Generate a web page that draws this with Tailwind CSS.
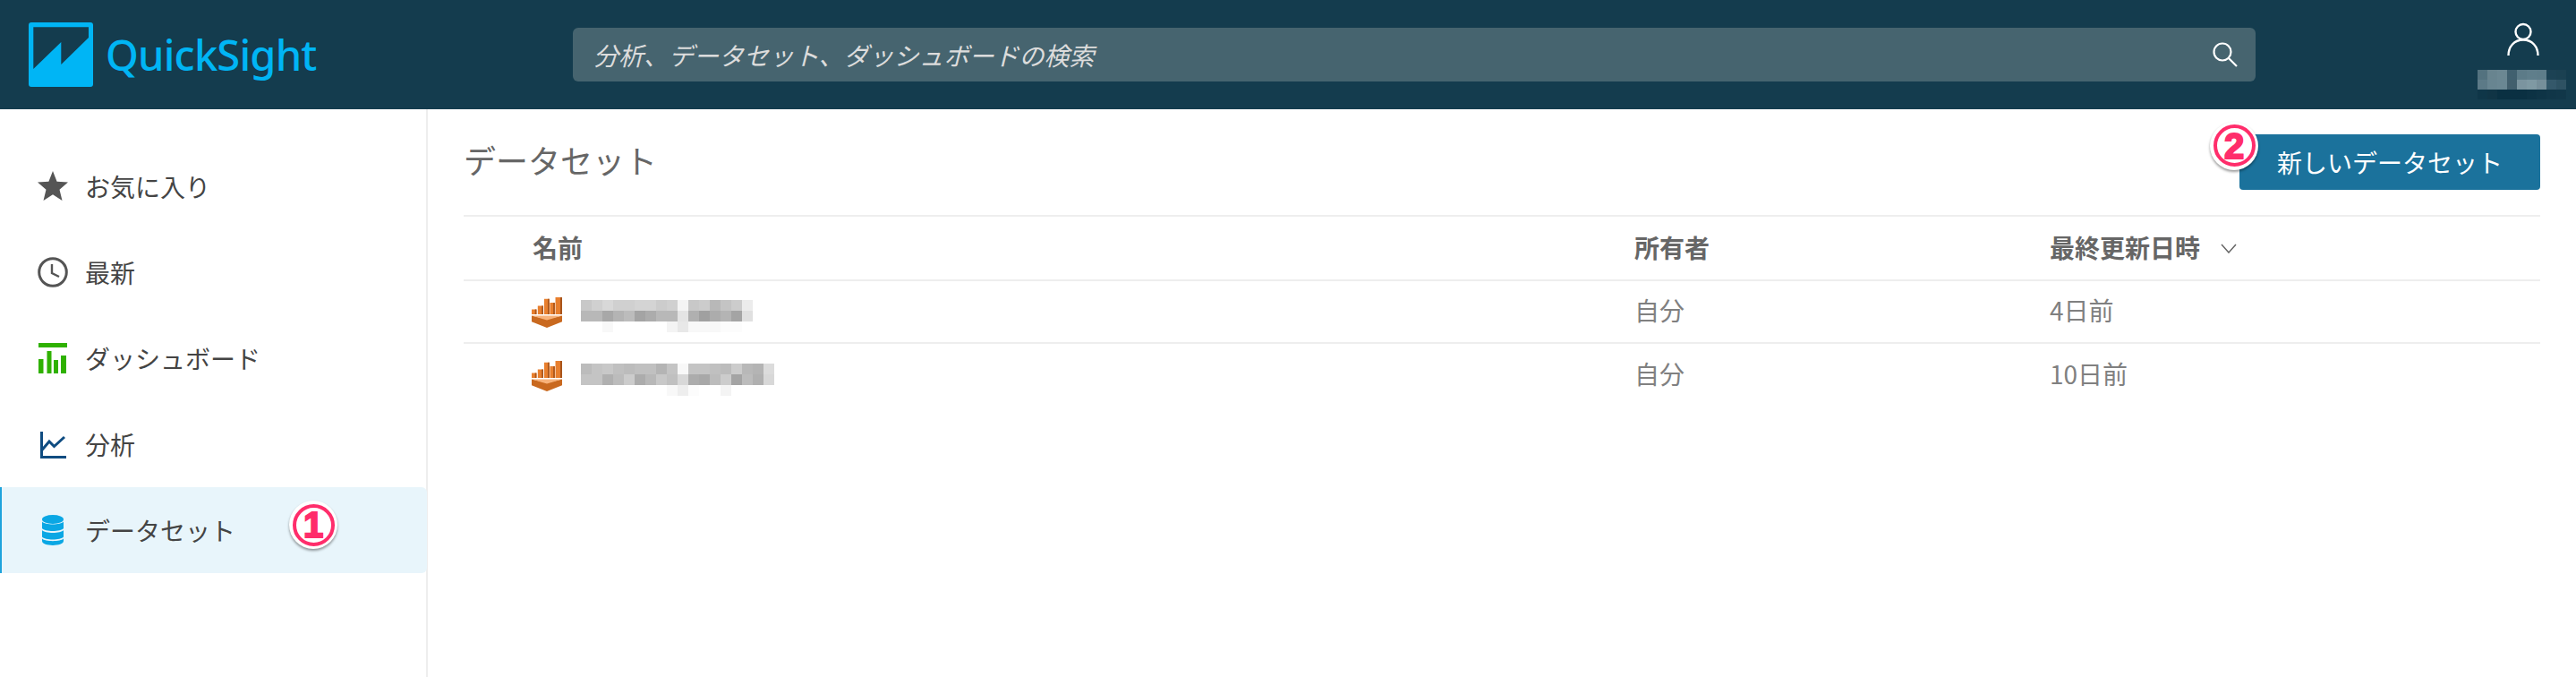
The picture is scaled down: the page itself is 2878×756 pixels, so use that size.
<!DOCTYPE html>
<html lang="ja">
<head>
  <meta charset="UTF-8">
  <title>QuickSight データセット</title>
  <script src="https://cdn.jsdelivr.net/npm/@tailwindcss/browser@4"></script>
</head>
<body class="font-['Noto_Sans_CJK_JP',sans-serif] bg-white">
  <div class="w-[2878px] h-[756px] flex flex-col overflow-hidden">

    <!-- top bar -->
    <header class="h-[122px] shrink-0 bg-[#143c4e] flex items-center">
      <div class="w-[640px] pl-[32px] flex items-center">
        <svg width="72" height="72" viewBox="0 0 72 72">
          <rect width="72" height="72" rx="3" fill="#00b5f5"/>
          <path d="M5.3 5.3H67V17L36.3 47V22L5.3 52Z" fill="#143c4e"/>
        </svg>
        <span class="ml-[14px] text-[47px] leading-none font-medium tracking-[-0.8px] text-[#00b5f5] font-['Noto_Sans',sans-serif]">QuickSight</span>
      </div>
      <div class="w-[1880px] h-[60px] rounded-[6px] bg-[#46646f] flex items-center justify-between pl-[23px] pr-[20px]">
        <span class="text-[28px] italic text-[#dcdcdc]">分析、データセット、ダッシュボードの検索</span>
        <svg width="28" height="28" viewBox="0 0 28 28" fill="none" stroke="#fff" stroke-width="2.2">
          <circle cx="11" cy="11" r="9.5"/>
          <path d="M18 18L27 27"/>
        </svg>
      </div>
      <div class="ml-auto w-[118px] h-full pt-[25px] flex flex-col items-center">
        <svg width="36" height="38" viewBox="0 0 36 38" fill="none" stroke="#fff" stroke-width="2.4">
          <circle cx="18" cy="10.5" r="8.5"/>
          <path d="M1.5 37C1.5 27 8 19.5 18 19.5S34.500 27 34.500 37"/>
        </svg>
        <div id="user-blur" class="mt-[15px] -ml-[4px] flex flex-col"></div>
      </div>
    </header>

    <div class="flex-1 flex">
      <!-- side nav -->
      <aside class="w-[478px] shrink-0 border-r-2 border-[#eeeeee] pt-[38px] text-[28px] text-[#444444]">
        <a class="h-[96px] flex items-center pl-[42px] gap-[19px]">
          <svg width="34" height="34" viewBox="0 0 34 34"><path d="M17 0L21.600 11.800L34 12.600L24.500 20.700L27.500 33L17 26.300L6.500 33L9.500 20.700L0 12.600L12.400 11.800Z" fill="#555555"/></svg>
          <span>お気に入り</span>
        </a>
        <a class="h-[96px] flex items-center pl-[42px] gap-[19px]">
          <svg width="34" height="34" viewBox="0 0 34 34" fill="none" stroke="#555555" stroke-width="3">
            <circle cx="17" cy="17" r="15.300"/>
            <path d="M16 8V18L24 22" stroke-width="2.400"/>
          </svg>
          <span>最新</span>
        </a>
        <a class="h-[96px] flex items-center pl-[42px] gap-[19px]">
          <svg width="34" height="34" viewBox="0 0 34 34" fill="#2fb100">
            <rect x="1" width="32" height="5"/>
            <rect x="1" y="18" width="5.500" height="16"/>
            <rect x="10.500" y="9" width="5" height="25"/>
            <rect x="18" y="19" width="5" height="15"/>
            <rect x="26" y="14" width="6" height="20"/>
          </svg>
          <span>ダッシュボード</span>
        </a>
        <a class="h-[96px] flex items-center pl-[42px] gap-[19px]">
          <svg width="34" height="34" viewBox="0 0 34 34" fill="none" stroke="#0f4c81" stroke-width="3">
            <path d="M4.500 3V31.500H32"/>
            <path d="M4.500 24L13 14L18.500 19.500L30 9"/>
          </svg>
          <span>分析</span>
        </a>
        <a class="relative h-[96px] flex items-center pl-[42px] gap-[19px] bg-[#e8f5fb] border-l-2 border-[#1fa3dc] rounded-r-[6px] -mr-[1px]">
          <svg class="-ml-[2px]" width="34" height="34" viewBox="0 0 34 34" fill="#0aa7e4">
            <ellipse cx="17" cy="5" rx="12" ry="5"/>
            <path d="M5 7.500C8 11.500 26 11.500 29 7.500V15C26 19 8 19 5 15Z"/>
            <path d="M5 17.500C8 21.500 26 21.500 29 17.500V25C26 29 8 29 5 25Z" transform="translate(0 -0.500)"/>
            <path d="M5 26.500C8 30 26 30 29 26.500V29C29 35.500 5 35.500 5 29Z"/>
          </svg>
          <span>データセット</span>
          <!-- callout 1 -->
          <div class="absolute left-[321px] top-[15px] w-[54px] h-[54px] rounded-full bg-white shadow-[0_2px_3px_rgba(0,0,0,0.4)] flex items-center justify-center">
            <div class="w-[47px] h-[47px] rounded-full border-[4px] border-[#ff2d6b] flex items-center justify-center text-[40px] leading-none font-black [-webkit-text-stroke:2px_#ff2d6b] text-[#ff2d6b] font-['Liberation_Sans',sans-serif]">1</div>
          </div>
        </a>
      </aside>

      <!-- dataset list -->
      <main class="flex-1 px-[40px]">
        <div class="h-[118px] flex items-center justify-between pb-[7px] pt-[1px]">
          <h1 class="text-[36px] font-normal text-[#666666]">データセット</h1>
          <div class="relative mt-[5px]">
            <button class="w-[336px] h-[62px] rounded-[4px] bg-[#1b729c] text-[28px] text-white">新しいデータセット</button>
            <!-- callout 2 -->
            <div class="absolute -left-[33px] -top-[14px] w-[54px] h-[54px] rounded-full bg-white shadow-[0_2px_3px_rgba(0,0,0,0.4)] flex items-center justify-center">
              <div class="w-[47px] h-[47px] rounded-full border-[4px] border-[#ff2d6b] flex items-center justify-center text-[40px] leading-none font-black [-webkit-text-stroke:2px_#ff2d6b] text-[#ff2d6b] font-['Liberation_Sans',sans-serif]">2</div>
            </div>
          </div>
        </div>
        <div class="grid grid-cols-[1308px_464px_1fr] border-t-2 border-[#eeeeee] text-[28px]">
          <div class="h-[72px] pl-[77px] pb-[2px] flex items-center font-bold text-[#666666] border-b-2 border-[#eeeeee]">名前</div>
          <div class="h-[72px] pb-[2px] flex items-center font-bold text-[#666666] border-b-2 border-[#eeeeee]">所有者</div>
          <div class="h-[72px] pb-[2px] flex items-center font-bold text-[#666666] border-b-2 border-[#eeeeee]">最終更新日時
            <svg class="ml-[23px] mt-[3px]" width="18" height="11" viewBox="0 0 18 11" fill="none" stroke="#666666" stroke-width="1.500"><path d="M1 1L9 10L17 1"/></svg>
          </div>

          <div class="h-[70px] pl-[76px] flex items-center gap-[21px] border-b-2 border-[#eeeeee]">
            <svg class="mt-[2px]" width="34" height="34" viewBox="0 0 100 100">
              <use href="#qs"/>
            </svg>
            <div id="name-blur-1" class="flex flex-col mt-[10px]"></div>
          </div>
          <div class="h-[70px] pb-[5px] flex items-center text-[#808080] border-b-2 border-[#eeeeee]">自分</div>
          <div class="h-[70px] pb-[5px] flex items-center text-[#808080] border-b-2 border-[#eeeeee]">4日前</div>

          <div class="h-[70px] pl-[76px] flex items-center gap-[21px]">
            <svg class="mt-[2px]" width="34" height="34" viewBox="0 0 100 100">
              <use href="#qs"/>
            </svg>
            <div id="name-blur-2" class="flex flex-col mt-[10px]"></div>
          </div>
          <div class="h-[70px] pb-[5px] flex items-center text-[#808080]">自分</div>
          <div class="h-[70px] pb-[5px] flex items-center text-[#808080]">10日前</div>
        </div>
      </main>
    </div>
  </div>

  <svg width="0" height="0" class="absolute">
    <defs>
      <g id="qs">
        <path d="M0 40H16V56H0ZM20 28H38V56H20ZM41 5H58V56H41ZM60 18H76V56H60ZM78 0H100V56H78Z" fill="#e87f2e"/>
        <path d="M11 40H16V56H11ZM33 28H38V56H33ZM53 5H58V56H53ZM71 18H76V56H71ZM94 0H100V56H94Z" fill="#a9551b"/>
        <path d="M0 60L50 72L100 60V80L50 100L0 80Z" fill="#c9691f"/>
        <path d="M0 60H100L50 75Z" fill="#f7b27a"/>
      </g>
    </defs>
  </svg>

  <script>
    // mosaic blocks over redacted names
    function drawBlur(id, rows, size) {
      const box = document.getElementById(id);
      rows.forEach(row => {
        const line = document.createElement('div');
        line.style.display = 'flex';
        row.forEach(color => {
          const cell = document.createElement('div');
          cell.style.width = size + 'px';
          cell.style.height = size + 'px';
          cell.style.background = color;
          line.appendChild(cell);
        });
        box.appendChild(line);
      });
    }

    const grey = list => list.map(v => `#${v}${v}${v}`);

    drawBlur('user-blur', [
      ['#53727f', '#68848f', '#6b8792', '#40606f', '#5c7b88', '#5f7e8b', '#5e7d8a', '#1c4254', '#1b4152'],
      ['#5c7a87', '#688591', '#6a8793', '#425f6d', '#7b949f', '#7f99a3', '#768f9a', '#34586a', '#2e5263'],
      ['#0f3648', '#103445', '#0a3042', '#0a3042', '#0a3042', '#0c3244', '#0e3446', '#103648', '#113749']
    ], 11);

    drawBlur('name-blur-1', [
      grey(['c8', 'd0', 'd8', 'd0', 'd0', 'd4', 'd4', 'cc', 'd0', 'f4', 'c8', 'cc', 'b8', 'c4', 'cc', 'ec']),
      grey(['b8', 'b8', 'a8', 'b4', 'bc', 'a4', 'ac', 'b8', 'b8', 'e4', 'b0', 'a0', 'ac', 'b4', 'a4', 'e0']),
      grey(['ff', 'ff', 'f8', 'ff', 'ff', 'ff', 'ff', 'ff', 'f4', 'e8', 'f8', 'f8', 'f8', 'fc', 'fc', 'ff'])
    ], 12);

    drawBlur('name-blur-2', [
      grey(['bc', 'c4', 'c8', 'c0', 'bc', 'c0', 'c0', 'b4', 'c4', 'f8', 'c4', 'c4', 'c0', 'bc', 'cc', 'b8', 'b4', 'dc']),
      grey(['c4', 'c4', 'b0', 'bc', 'cc', 'ac', 'b8', 'c8', 'c0', 'd8', 'ac', 'a8', 'bc', 'cc', 'a4', 'bc', 'b0', 'd8']),
      grey(['ff', 'ff', 'ff', 'ff', 'ff', 'ff', 'ff', 'ff', 'f8', 'ee', 'fc', 'ff', 'ff', 'f4', 'ff', 'ff', 'ff', 'ff'])
    ], 12);
  </script>
</body>
</html>
